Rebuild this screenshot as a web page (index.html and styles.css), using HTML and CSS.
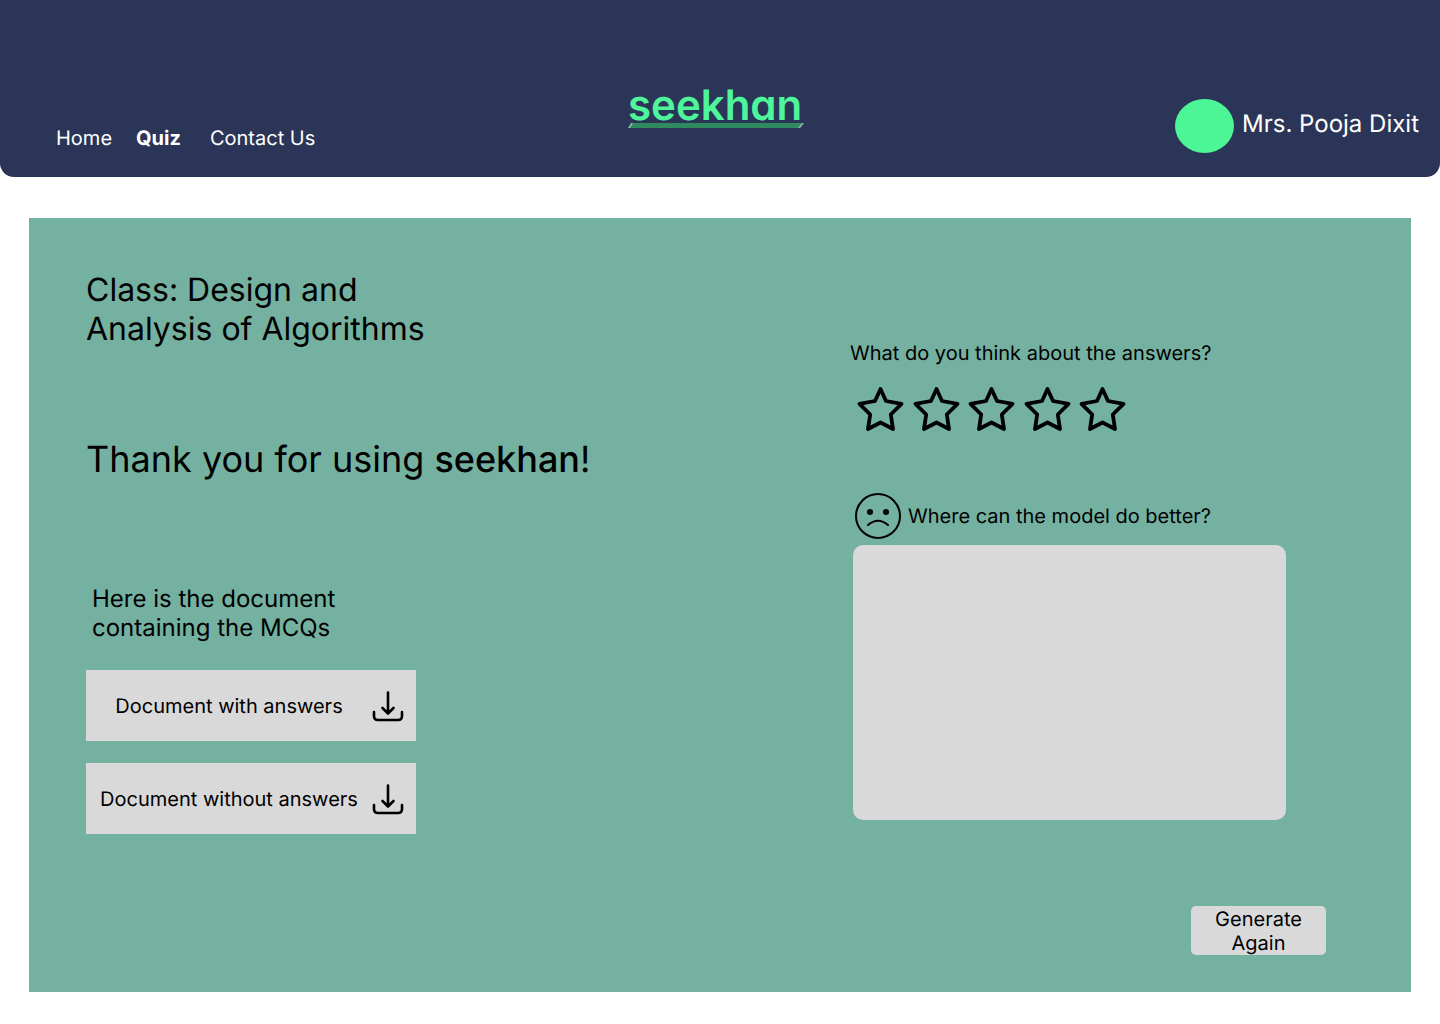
FILE: index.html
```html
<!DOCTYPE html>
<html lang="en">
<head>
<meta charset="utf-8">
<meta name="viewport" content="width=device-width, initial-scale=1">
<title>seekhan – Quiz</title>
<link rel="stylesheet" href="styles.css">
</head>
<body>
<svg class="sprite" aria-hidden="true">
  <symbol id="star" viewBox="0 0 48 48">
    <path stroke-width="3.8" d="M24.5 4L30 16L45.5 18.8L34.8 29.5L37 44L24.5 37.5L12 44L14.2 29.5L3.5 18.8L19 16Z"/>
  </symbol>
  <symbol id="download" viewBox="0 0 32 32">
    <path stroke-width="2.6" d="M16 2.5V23M10.5 18L16 23.5L21.5 18M2 22V26Q2 30 6 30H26Q30 30 30 26V22"/>
  </symbol>
</svg>

<header class="header">
  <nav class="nav" aria-label="Main">
    <a class="nav-link" href="#home">Home</a>
    <a class="nav-link nav-link-active" href="#quiz" aria-current="page">Quiz</a>
    <a class="nav-link" href="#contact">Contact Us</a>
  </nav>
  <a class="logo" href="#home">
    <span class="logo-text">seekhan</span>
    <svg class="logo-line" viewBox="0 0 176 5" aria-hidden="true">
      <path fill="#2f8a60" d="M4 0H176L172 5H0Z"/>
      <path fill="#8fb5a8" d="M3 0H5L2 5H0ZM174 0H176L172 5H170Z"/>
    </svg>
  </a>
  <div class="user">
    <span class="avatar"></span>
    <span class="user-name">Mrs. Pooja Dixit</span>
  </div>
</header>

<main class="panel">
  <section class="result">
    <h1 class="class-name">Class: Design and<br>Analysis of Algorithms</h1>
    <p class="thanks">Thank you for using <strong>seekhan</strong>!</p>
    <p class="intro">Here is the document<br>containing the MCQs</p>
    <div class="downloads">
      <button class="download" type="button">
        <span class="download-label">Document with answers</span>
        <svg class="download-icon" aria-hidden="true"><use href="#download"/></svg>
      </button>
      <button class="download" type="button">
        <span class="download-label">Document without answers</span>
        <svg class="download-icon" aria-hidden="true"><use href="#download"/></svg>
      </button>
    </div>
  </section>

  <form class="feedback">
    <fieldset class="rating">
      <legend class="question">What do you think about the answers?</legend>
      <div class="stars">
        <label class="star"><input class="star-input" type="radio" name="rating" value="1" aria-label="1 star"><svg class="star-icon" aria-hidden="true"><use href="#star"/></svg></label>
        <label class="star"><input class="star-input" type="radio" name="rating" value="2" aria-label="2 stars"><svg class="star-icon" aria-hidden="true"><use href="#star"/></svg></label>
        <label class="star"><input class="star-input" type="radio" name="rating" value="3" aria-label="3 stars"><svg class="star-icon" aria-hidden="true"><use href="#star"/></svg></label>
        <label class="star"><input class="star-input" type="radio" name="rating" value="4" aria-label="4 stars"><svg class="star-icon" aria-hidden="true"><use href="#star"/></svg></label>
        <label class="star"><input class="star-input" type="radio" name="rating" value="5" aria-label="5 stars"><svg class="star-icon" aria-hidden="true"><use href="#star"/></svg></label>
      </div>
    </fieldset>
    <label class="comment-label" for="comment">
      <svg class="face" viewBox="0 0 46 46" aria-hidden="true">
        <circle class="face-line" cx="23" cy="23" r="22"/>
        <circle cx="15" cy="19" r="3"/>
        <circle cx="31" cy="19" r="3"/>
        <path class="face-line" d="M13 32Q23 23.5 33 32"/>
      </svg>
      <span class="question">Where can the model do better?</span>
    </label>
    <textarea class="comment" id="comment"></textarea>
    <button class="again" type="submit">Generate Again</button>
  </form>
</main>
</body>
</html>
```
FILE: styles.css
```css
*, *::before, *::after {
  box-sizing: border-box;
}

body {
  margin: 0;
  background: #fff;
  color: #000;
  font-family: Inter, "Liberation Sans", sans-serif;
  font-size: 20px;
  line-height: 24px;
  text-rendering: geometricPrecision;
}

h1, p {
  margin: 0;
  font-weight: 400;
}

button, textarea {
  border: 0;
  background: #d9d9d9;
  color: inherit;
  font: inherit;
  text-rendering: inherit;
}

button {
  cursor: pointer;
}

.sprite {
  display: none;
}

/* Header */

.header {
  display: grid;
  grid-template-columns: 1fr auto 1fr;
  align-items: end;
  padding: 89px 21px 24px;
  border-radius: 0 0 14px 14px;
  background: #2b3557;
  color: #fff;
}

.nav {
  display: flex;
  gap: 24px;
  padding: 0 0 3px 35px;
}

.nav-link {
  color: inherit;
  text-decoration: none;
}

.nav-link-active {
  margin-right: 5px;
  font-weight: 700;
}

.logo {
  display: flex;
  flex-direction: column;
  margin-right: 8px;
  padding-bottom: 25px;
  color: #4ff59b;
  text-decoration: none;
}

.logo-text {
  font-feature-settings: "cv11";
  font-size: 42px;
  font-weight: 600;
  line-height: 34px;
}

.logo-line {
  width: 176px;
  height: 5px;
}

.user {
  display: flex;
  justify-content: flex-end;
  gap: 8px;
}

.avatar {
  width: 59px;
  height: 54px;
  border-radius: 50%;
  background: #4cf595;
}

.user-name {
  padding-top: 10px;
  font-size: 24px;
  line-height: 29px;
}

/* Panel */

.panel {
  display: grid;
  grid-template-columns: minmax(0, 1fr) 476px;
  margin: 41px 29px 32px;
  padding: 52px 85px 37px 57px;
  background: #74b1a1;
}

.class-name {
  font-size: 32px;
  line-height: 39px;
}

.thanks {
  margin-top: 89px;
  font-size: 36px;
  line-height: 44px;
}

.thanks strong {
  font-weight: 500;
}

.intro {
  margin-top: 103px;
  padding-left: 6px;
  font-size: 24px;
  line-height: 29px;
}

.downloads {
  display: grid;
  gap: 22px;
  max-width: 330px;
  margin-top: 28px;
}

.download {
  display: flex;
  align-items: center;
  height: 71px;
  padding: 0 12px 0 0;
}

.download-label {
  flex: 1;
  text-align: center;
}

.download-icon {
  width: 32px;
  height: 32px;
  fill: none;
  stroke: #000;
  stroke-linecap: round;
  stroke-linejoin: round;
}

/* Feedback */

.feedback {
  display: flex;
  flex-direction: column;
  align-items: flex-start;
  padding-top: 71px;
}

.rating {
  min-width: 0;
  margin: 0;
  padding: 0;
  border: 0;
}

.rating .question {
  padding: 0;
}

.stars {
  display: flex;
  justify-content: space-between;
  width: 270px;
  margin: 20px 0 0 6px;
}

.star {
  display: grid;
  cursor: pointer;
}

.star-input,
.star-icon {
  grid-area: 1 / 1;
  width: 48px;
  height: 48px;
  margin: 0;
}

.star-input {
  appearance: none;
}

.star-icon {
  fill: none;
  stroke: #000;
  stroke-linejoin: round;
}

.star-input:checked + .star-icon {
  fill: #000;
}

.comment-label {
  display: flex;
  align-items: center;
  gap: 7px;
  margin: 60px 0 6px 5px;
}

.face {
  width: 46px;
  height: 46px;
}

.face-line {
  fill: none;
  stroke: #000;
  stroke-width: 2;
  stroke-linecap: round;
}

.comment {
  width: 433px;
  height: 275px;
  margin-left: 3px;
  padding: 12px;
  border-radius: 10px;
  resize: none;
}

.again {
  align-self: flex-end;
  width: 135px;
  margin-top: 86px;
  padding: 1px 20px 0;
  border-radius: 5px;
}
```
